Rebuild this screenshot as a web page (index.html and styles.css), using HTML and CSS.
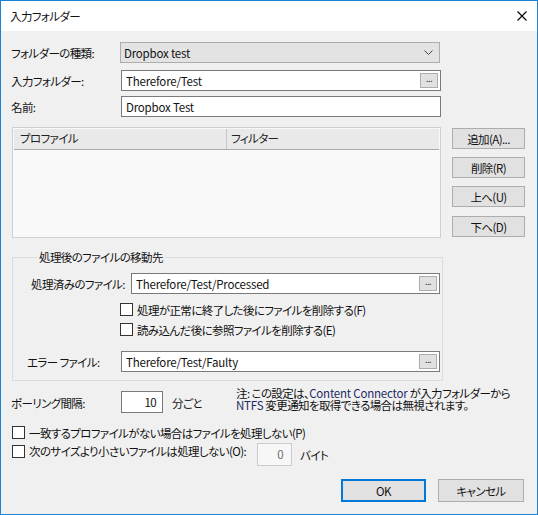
FILE: index.html
```html
<!DOCTYPE html>
<html lang="ja">
<head>
<meta charset="utf-8">
<title>入力フォルダー</title>
<link rel="stylesheet" href="styles.css">
</head>
<body>
<div class="window">
  <div class="titlebar">
    <span class="title">入力フォルダー</span>
    <svg class="close" width="10" height="10" viewBox="0 0 10 10"><path d="M0.5 0.5 L9.5 9.5 M9.5 0.5 L0.5 9.5" stroke="#000" stroke-width="1.1" fill="none"/></svg>
  </div>
  <div class="content">
    <div class="row r-type">
      <span class="lbl">フォルダーの種類:</span>
      <div class="combo">
        <span class="val">Dropbox test</span>
        <svg class="chev" width="9" height="5" viewBox="0 0 9 5"><path d="M0.5 0.5 L4.5 4.5 L8.5 0.5" stroke="#444" stroke-width="1" fill="none"/></svg>
      </div>
    </div>
    <div class="row r-in">
      <span class="lbl">入力フォルダー:</span>
      <div class="field wide">
        <span class="val">Therefore/Test</span>
        <span class="browse">...</span>
      </div>
    </div>
    <div class="row r-name">
      <span class="lbl">名前:</span>
      <div class="field wide"><span class="val">Dropbox Test</span></div>
    </div>

    <div class="profiles">
      <div class="listview">
        <div class="lv-head">
          <div class="col c1">プロファイル</div>
          <div class="col c2">フィルター</div>
        </div>
        <div class="lv-body"></div>
      </div>
      <div class="side-buttons">
        <span class="btn">追加(A)...</span>
        <span class="btn">削除(R)</span>
        <span class="btn">上へ(U)</span>
        <span class="btn">下へ(D)</span>
      </div>
    </div>

    <fieldset class="group">
      <legend>処理後のファイルの移動先</legend>
      <div class="row r-done">
        <span class="lbl">処理済みのファイル:</span>
        <div class="field done"><span class="val">Therefore/Test/Processed</span><span class="browse">...</span></div>
      </div>
      <div class="check c-first"><span class="box"></span><span>処理が正常に終了した後にファイルを削除する(F)</span></div>
      <div class="check c-second"><span class="box"></span><span>読み込んだ後に参照ファイルを削除する(E)</span></div>
      <div class="row r-err">
        <span class="lbl">エラー ファイル:</span>
        <div class="field err"><span class="val">Therefore/Test/Faulty</span><span class="browse">...</span></div>
      </div>
    </fieldset>

    <div class="poll">
      <span class="lbl">ポーリング間隔:</span>
      <div class="spin">10</div>
      <span class="unit">分ごと</span>
      <p class="note"><span class="line">注: この設定は、<span class="latin">Content Connector</span> が入力フォルダーから</span><span class="line"><span class="latin">NTFS</span> 変更通知を取得できる場合は無視されます。</span></p>
    </div>

    <div class="opt opt-p"><span class="box"></span><span>一致するプロファイルがない場合はファイルを処理しない(P)</span></div>
    <div class="opt opt-o">
      <span class="box"></span><span class="otext">次のサイズより小さいファイルは処理しない(O):</span>
      <div class="size">0</div>
      <span class="bytes">バイト</span>
    </div>

    <div class="actions">
      <span class="btn ok">OK</span>
      <span class="btn cancel">キャンセル</span>
    </div>
  </div>
</div>
</body>
</html>
```

FILE: styles.css
```css
* { box-sizing: border-box; }

html, body {
  margin: 0;
  padding: 0;
  background: #f0f0f0;
}

body {
  font-family: "Noto Sans CJK JP", sans-serif;
  font-size: 11.5px;
  letter-spacing: -0.6px;
  color: #111;
  font-feature-settings: "palt";
}

.window {
  width: 538px;
  height: 515px;
  border: 1px solid #1883d7;
  background: #f0f0f0;
  display: flex;
  flex-direction: column;
}

/* title bar */
.titlebar {
  height: 30px;
  background: #fff;
  display: flex;
  align-items: center;
  justify-content: space-between;
  padding: 0 10px 0 9px;
  flex: none;
}
.title { line-height: 14px; }
.close { display: block; }

.content {
  padding: 0 13px 0 10px;
  flex: 1;
  display: flex;
  flex-direction: column;
}

/* label + control rows */
.row {
  display: flex;
  align-items: center;
  height: 21px;
}
.row .lbl {
  width: 109px;
  flex: none;
  line-height: 14px;
  white-space: nowrap;
}
.r-type { margin-top: 11px; }
.r-in { margin-top: 7px; }
.r-name { margin-top: 5px; }

.combo {
  width: 320px;
  height: 21px;
  border: 1px solid #adadad;
  background: #e3e3e3;
  display: flex;
  align-items: center;
  justify-content: space-between;
  padding: 0 6px 0 3px;
  flex: none;
}
.chev { display: block; }

.val {
  line-height: 14px;
  white-space: nowrap;
  letter-spacing: -0.2px;
}

.field {
  height: 21px;
  border: 1px solid #7a7a7a;
  background: #fff;
  display: flex;
  align-items: center;
  justify-content: space-between;
  padding: 0 2px 0 4px;
  flex: none;
}
.field.wide { width: 320px; margin-left: 1px; }

.browse {
  width: 18px;
  height: 15px;
  border: 1px solid #adadad;
  background: #e1e1e1;
  font-size: 9px;
  line-height: 9px;
  letter-spacing: -0.5px;
  text-align: center;
  color: #333;
}

/* profile list + side buttons */
.profiles {
  display: flex;
  margin-top: 10px;
  height: 111px;
}
.listview {
  width: 429px;
  height: 111px;
  margin-left: 1px;
  border: 1px solid #d0d0d0;
  padding: 1px;
  background: #f9f9f9;
  display: flex;
  flex-direction: column;
  flex: none;
}
.lv-head {
  height: 21px;
  display: flex;
  background: #e9e9e9;
  border-bottom: 1px solid #a9a9a9;
  flex: none;
}
.col {
  line-height: 19px;
  color: #222;
  white-space: nowrap;
}
.c1 {
  width: 213px;
  padding-left: 6px;
  border-right: 1px solid #c8c8c8;
}
.c2 { padding-left: 4px; }
.lv-body { flex: 1; }

.side-buttons {
  margin-left: 11px;
  width: 73px;
  display: flex;
  flex-direction: column;
  padding-top: 1px;
  flex: none;
}
.btn {
  height: 21px;
  border: 1px solid #adadad;
  background: #e1e1e1;
  display: flex;
  align-items: center;
  justify-content: center;
  line-height: 14px;
  white-space: nowrap;
}
.side-buttons .btn + .btn { margin-top: 8px; }
.side-buttons .btn:last-child { margin-top: 9px; }

/* group box */
.group {
  margin: 12px 0 0 1px;
  width: 431px;
  border: 1px solid #dcdcdc;
  padding: 0 0 8px 18px;
  min-width: 0;
}
.group legend {
  margin-left: 6px;
  padding: 0 2px;
  line-height: 14px;
}
.r-done { margin-top: 9px; }
.r-done .lbl { width: 100px; }
.field.done { width: 309px; }
.r-err { margin-top: 15px; }
.r-err .lbl { width: 94px; margin-left: -4px; }
.field.err { width: 319px; }

.check {
  display: flex;
  align-items: center;
  height: 13px;
  margin-left: 89px;
  line-height: 14px;
  white-space: nowrap;
}
.c-first { margin-top: 9px; }
.c-second { margin-top: 7px; }

.box {
  width: 13px;
  height: 13px;
  border: 1px solid #333;
  background: #fff;
  flex: none;
  margin-right: 4px;
}

/* polling interval */
.poll {
  display: flex;
  align-items: flex-start;
  margin-top: 6px;
}
.poll > * { flex: none; }
.poll .lbl {
  width: 110px;
  margin-top: 9px;
  line-height: 14px;
}
.spin {
  width: 42px;
  height: 22px;
  margin-top: 4px;
  border: 1px solid #7a7a7a;
  background: #fff;
  text-align: right;
  padding-right: 6px;
  line-height: 20px;
}
.unit {
  margin: 9px 0 0 9px;
  line-height: 14px;
  width: 64px;
}
.note {
  margin: 0;
  white-space: nowrap;
  display: flex;
  flex-direction: column;
}
.note .line {
  display: block;
  height: 12px;
  line-height: 12px;
}
.latin { color: #1d2a66; letter-spacing: -0.2px; }

/* bottom options */
.opt {
  display: flex;
  align-items: flex-start;
  line-height: 14px;
  white-space: nowrap;
}
.opt > * { flex: none; }
.opt-p { margin-top: 13px; align-items: center; height: 13px; margin-left: 1px; }
.opt-o { margin-top: 4px; margin-left: 1px; }
.opt-o .box { margin-top: 2px; }
.opt-o .otext { margin-top: 1px; }

.size {
  width: 35px;
  height: 23px;
  margin-left: 11px;
  border: 1px solid #cccccc;
  background: #f7f7f7;
  color: #6d6d6d;
  text-align: right;
  padding-right: 8px;
  line-height: 21px;
}
.bytes { margin: 5px 0 0 8px; }

/* dialog buttons */
.actions {
  display: flex;
  justify-content: flex-end;
  margin-top: 13px;
  gap: 12px;
}
.actions .btn { height: 23px; }
.ok {
  width: 85px;
  border: 2px solid #0078d7;
}
.cancel { width: 86px; }
```
